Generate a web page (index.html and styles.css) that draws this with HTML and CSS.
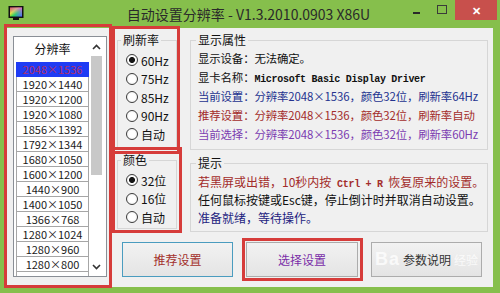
FILE: index.html
```html
<!DOCTYPE html>
<html lang="zh-CN">
<head>
<meta charset="utf-8">
<title>自动设置分辨率</title>
<link rel="stylesheet" href="styles.css">
</head>
<body>
<div class="window">
  <div class="titlebar">
    <div class="tb-left">
      <svg class="appicon" width="16" height="16" viewBox="0 0 16 16">
        <defs>
          <linearGradient id="g1" x1="0" y1="0" x2="1" y2="1">
            <stop offset="0" stop-color="#ff2020"/>
            <stop offset="0.35" stop-color="#ffe020"/>
            <stop offset="0.6" stop-color="#20d040"/>
            <stop offset="1" stop-color="#2040ff"/>
          </linearGradient>
          <linearGradient id="g2" x1="1" y1="0" x2="0" y2="1">
            <stop offset="0" stop-color="#ff30ff" stop-opacity="0.8"/>
            <stop offset="1" stop-color="#30ffff" stop-opacity="0"/>
          </linearGradient>
        </defs>
        <rect x="0.5" y="1" width="15" height="12" fill="#111"/>
        <rect x="2" y="2.5" width="12" height="9" fill="url(#g1)"/>
        <rect x="2" y="2.5" width="12" height="9" fill="url(#g2)"/>
        <rect x="5" y="13" width="6" height="2" fill="#111"/>
      </svg>
    </div>
    <div class="title">自动设置分辨率 - V1.3.2010.0903 X86U</div>
    <div class="controls">
      <span class="ctl ctl-min"><span class="dash"></span></span>
      <span class="ctl ctl-max"><span class="box"></span></span>
      <span class="ctl ctl-close">✕</span>
    </div>
  </div>

  <div class="client">
    <div class="list">
      <div class="list-body">
        <div class="list-head">分辨率</div>
        <div class="row sel">2048×1536</div>
        <div class="row">1920×1440</div>
        <div class="row">1920×1200</div>
        <div class="row">1920×1080</div>
        <div class="row">1856×1392</div>
        <div class="row">1792×1344</div>
        <div class="row">1680×1050</div>
        <div class="row">1600×1200</div>
        <div class="row">1440×900</div>
        <div class="row">1400×1050</div>
        <div class="row">1366×768</div>
        <div class="row">1280×1024</div>
        <div class="row">1280×960</div>
        <div class="row">1280×800</div>
        <div class="row">1280×768</div>
      </div>
      <div class="scroll">
        <div class="arrow">
          <svg width="9" height="6" viewBox="0 0 9 6"><polyline points="1,5 4.5,1.5 8,5" fill="none" stroke="#333" stroke-width="1.6"/></svg>
        </div>
        <div class="thumb"></div>
        <div class="track"></div>
        <div class="arrow">
          <svg width="9" height="6" viewBox="0 0 9 6"><polyline points="1,1 4.5,4.5 8,1" fill="none" stroke="#333" stroke-width="1.6"/></svg>
        </div>
      </div>
    </div>

    <div class="main">
      <div class="groups">
        <div class="col-mid">
          <fieldset class="grp grp-rate">
            <legend>刷新率</legend>
            <div class="grp-body radios">
              <label class="radio"><span class="dot on"></span>60Hz</label>
              <label class="radio"><span class="dot"></span>75Hz</label>
              <label class="radio"><span class="dot"></span>85Hz</label>
              <label class="radio"><span class="dot"></span>90Hz</label>
              <label class="radio"><span class="dot"></span>自动</label>
            </div>
          </fieldset>
          <fieldset class="grp grp-color">
            <legend>颜色</legend>
            <div class="grp-body radios">
              <label class="radio"><span class="dot on"></span>32位</label>
              <label class="radio"><span class="dot"></span>16位</label>
              <label class="radio"><span class="dot"></span>自动</label>
            </div>
          </fieldset>
        </div>
        <div class="col-right">
          <fieldset class="grp grp-info">
            <legend>显示属性</legend>
            <div class="grp-body info">
              <div class="line">显示设备：无法确定。</div>
              <div class="line">显卡名称：<span class="mono">Microsoft Basic Display Driver</span></div>
              <div class="line c-blue">当前设置：分辨率2048×1536，颜色32位，刷新率64Hz</div>
              <div class="line c-red">推荐设置：分辨率2048×1536，颜色32位，刷新率自动</div>
              <div class="line c-purple">当前选择：分辨率2048×1536，颜色32位，刷新率60Hz</div>
            </div>
          </fieldset>
          <fieldset class="grp grp-tip">
            <legend>提示</legend>
            <div class="grp-body tips">
              <div class="tline c-red">若黑屏或出错，10秒内按<span class="mono"> Ctrl + R </span>恢复原来的设置。</div>
              <div class="tline">任何鼠标按键或Esc键，停止倒计时并取消自动设置。</div>
              <div class="tline c-navy">准备就绪，等待操作。</div>
            </div>
          </fieldset>
        </div>
      </div>
      <div class="buttons">
        <button class="btn btn-default">推荐设置</button>
        <button class="btn btn-select">选择设置</button>
        <button class="btn btn-help"><span class="wm wm-l">Ba</span><span class="btn-text">参数说明</span><span class="wm wm-r">经验</span></button>
      </div>
    </div>
  </div>

  <div class="mark mark-list"></div>
  <div class="mark mark-rate"></div>
  <div class="mark mark-color"></div>
  <div class="mark mark-select"></div>
</div>
</body>
</html>
```

FILE: styles.css
```css
html, body {
  margin: 0;
  padding: 0;
}
body {
  font-family: "Noto Sans CJK SC", "Noto Sans", sans-serif;
  font-size: 12px;
  color: #111;
}
.window {
  position: relative;
  width: 500px;
  height: 293px;
  background: #86bf4c;
  overflow: hidden;
}

/* title bar */
.titlebar {
  height: 28px;
  display: grid;
  grid-template-columns: 1fr auto 1fr;
  align-items: start;
  padding-right: 3px;
}
.tb-left {
  padding: 5px 0 0 8px;
}
.appicon {
  display: block;
}
.title {
  font-size: 14px;
  line-height: 28px;
  color: #2a2a2a;
  white-space: nowrap;
}
.controls {
  display: flex;
  justify-content: flex-end;
}
.ctl {
  height: 20px;
  display: flex;
  align-items: center;
  justify-content: center;
}
.ctl-min, .ctl-max {
  width: 26px;
}
.ctl-min .dash {
  width: 7px;
  height: 2px;
  background: #2a2a2a;
  margin-top: 5px;
}
.ctl-max .box {
  width: 8px;
  height: 7px;
  border: 1px solid #3a3a3a;
  margin-top: -2px;
}
.ctl-close {
  width: 42px;
  background: #c8504c;
  color: #fff;
  font-size: 11px;
  font-weight: bold;
}

/* client area */
.client {
  margin: 0 7px;
  height: 259px;
  background: #f0f0f0;
  display: flex;
  align-items: flex-start;
  padding: 5px 5px 0 6px;
  box-sizing: border-box;
}

/* resolution list */
.list {
  flex: 0 0 94px;
  margin-top: 3px;
  width: 94px;
  height: 241px;
  box-sizing: border-box;
  border: 1px solid #8a8f96;
  background: #fff;
  display: flex;
  overflow: hidden;
}
.list-body {
  width: 75px;
  padding-left: 2px;
  box-sizing: border-box;
}
.list-head {
  height: 25px;
  line-height: 24px;
  text-align: center;
  font-size: 12px;
  color: #111;
}
.row {
  height: 15px;
  box-sizing: border-box;
  border: 1px solid #a6a6a6;
  border-top: none;
  line-height: 14px;
  text-align: center;
  font-size: 11px;
  color: #1a1a1a;
  width: 73px;
}
.row.sel {
  background: #1f3cf4;
  color: #b0306a;
  border-color: #1f3cf4;
}
.scroll {
  width: 17px;
  display: flex;
  flex-direction: column;
  align-items: flex-start;
}
.arrow {
  width: 15px;
  height: 19px;
  display: flex;
  align-items: center;
  justify-content: center;
}
.thumb {
  margin-left: 2px;
  width: 11px;
  height: 119px;
  background: #c8c8c8;
}
.track {
  flex: 1;
}

/* right side */
.main {
  flex: 1;
  min-width: 0;
  margin-left: 10px;
  display: flex;
  flex-direction: column;
}
.groups {
  display: flex;
  gap: 13px;
}
.col-mid {
  flex: 0 0 60px;
  display: flex;
  flex-direction: column;
}
.col-right {
  flex: 1;
  min-width: 0;
  display: flex;
  flex-direction: column;
}
.grp {
  margin: 0;
  padding: 0;
  border: 1px solid #d6d6d6;
  box-sizing: border-box;
  min-width: 0;
}
.grp legend {
  padding: 0 2px;
  margin-left: 5px;
  line-height: 14px;
  font-size: 12px;
  color: #111;
}
.col-mid .grp legend {
  margin-left: 3px;
}
.grp-rate {
  height: 117px;
}
.grp-color {
  margin-top: 3px;
  height: 76px;
}
.grp-info {
  height: 117px;
}
.grp-tip {
  margin-top: 6px;
  height: 76px;
}
.radios {
  padding: 4px 0 0 8px;
}
.info {
  padding: 2px 0 0 7px;
}
.tips {
  padding: 3px 0 0 7px;
}
.radio {
  display: flex;
  align-items: center;
  gap: 3px;
  height: 18.5px;
  font-size: 12px;
  color: #111;
}
.dot {
  width: 12px;
  height: 12px;
  box-sizing: border-box;
  border: 1px solid #3c3c3c;
  border-radius: 50%;
  background: radial-gradient(circle, #ffffff 0 3px, #ececec 6px);
}
.dot.on {
  background: radial-gradient(circle, #151515 0 2.6px, #ffffff 3.4px, #ececec 6px);
}
.line {
  height: 19px;
  line-height: 19px;
  white-space: nowrap;
  font-size: 11.4px;
  letter-spacing: -0.1px;
}
.tline {
  height: 18px;
  line-height: 18px;
  white-space: nowrap;
}
.mono {
  font-family: "Liberation Mono", monospace;
  font-size: 10px;
  letter-spacing: -0.3px;
  font-weight: bold;
}
.c-blue { color: #24338f; }
.c-red { color: #a32c2a; }
.c-purple { color: #7b3cb0; }
.c-navy { color: #1e2380; }

/* buttons */
.buttons {
  margin-top: 10px;
  margin-left: 5px;
  display: grid;
  grid-template-columns: 111px 112px 111px;
  gap: 13px;
}
.btn {
  height: 35px;
  border: 1px solid #acacac;
  background: linear-gradient(#f2f2f2, #e4e4e4);
  font-family: "Noto Sans CJK SC", sans-serif;
  font-size: 12px;
  padding: 0;
  color: #222;
  overflow: hidden;
  white-space: nowrap;
}
.btn-default {
  border-color: #4a9cbf;
  color: #a3302b;
}
.btn-select {
  color: #7a2ea8;
}
.btn-help {
  color: #333;
  display: flex;
  align-items: center;
  justify-content: center;
  gap: 3px;
}
.wm {
  color: rgba(255, 255, 255, 0.75);
}
.wm-l {
  font-family: "Liberation Sans", sans-serif;
  font-size: 18px;
  font-weight: bold;
  letter-spacing: 1px;
}
.wm-r {
  font-size: 12px;
}

/* red annotation boxes drawn over the screenshot */
.mark {
  position: absolute;
  border: 3px solid #d63c3a;
  box-sizing: border-box;
  pointer-events: none;
}
.mark-list { left: 4px; top: 24px; width: 108px; height: 264px; }
.mark-rate { left: 112px; top: 26px; width: 68px; height: 128px; }
.mark-color { left: 112px; top: 147px; width: 70px; height: 86px; }
.mark-select { left: 242px; top: 238px; width: 121px; height: 43px; }
```
